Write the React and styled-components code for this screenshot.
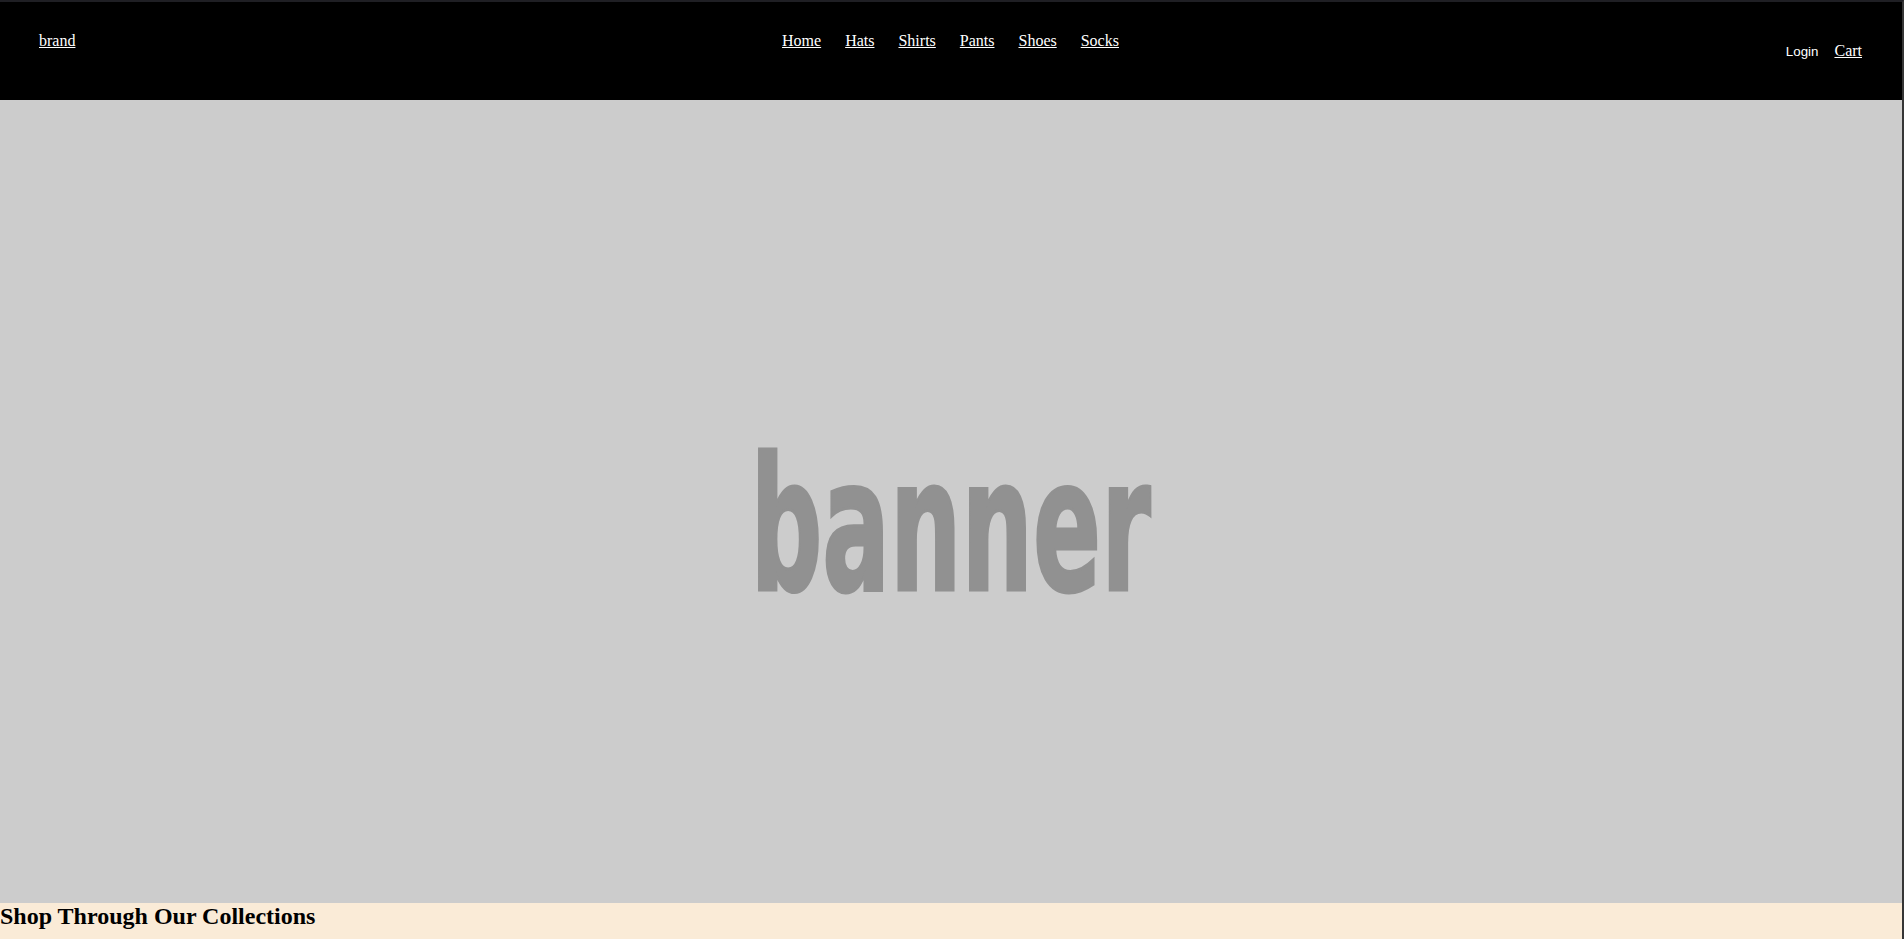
import React from 'react'
import styled, { createGlobalStyle } from 'styled-components'

const GlobalStyle = createGlobalStyle`
    html, body {
        margin: 0;
        padding: 0;
        overflow: hidden;
        background: #ffffff;
    }
    body {
        font-family: "Liberation Serif", "Times New Roman", serif;
        font-size: 16px;
    }
`

const Page = styled.div`
    width: 1904px;
    box-sizing: border-box;
    border-top: 2px solid #1f1f24;
    border-right: 2px solid #363636;
`

const Header = styled.header`
    display: grid;
    grid-template-columns: 1fr auto 1fr;
    align-items: start;
    height: 98px;
    box-sizing: border-box;
    padding: 30px 40px 0 39px;
    background: #000000;
`

const Brand = styled.a`
    justify-self: start;
    color: #ffffff;
    text-decoration: underline;
    cursor: pointer;
`

const Nav = styled.nav`
    display: flex;
    gap: 24px;
`

const NavLink = styled.a`
    color: #ffffff;
    text-decoration: underline;
    cursor: pointer;
`

const Account = styled.div`
    justify-self: end;
    display: flex;
    align-items: baseline;
    gap: 10px;
    margin-top: 10px;
`

const LoginButton = styled.button`
    padding: 1px 6px;
    border: none;
    background: none;
    color: #ffffff;
    font-family: "Liberation Sans", Arial, sans-serif;
    font-size: 13.33px;
    cursor: pointer;
`

const Banner = styled.section`
    display: flex;
    align-items: center;
    justify-content: center;
    height: 803px;
    overflow: hidden;
    background: #cccccc;
`

const BannerText = styled.span`
    display: block;
    font-family: "DejaVu Sans", sans-serif;
    font-stretch: condensed;
    font-weight: 700;
    font-size: 186px;
    line-height: 1;
    color: #919191;
    -webkit-text-stroke: 3px #919191;
    transform: translateY(24px) scaleX(0.6);
`

const Collections = styled.section`
    background: #faebd7;
    min-height: 200px;
`

const Title = styled.h2`
    margin: 0;
    font-size: 24px;
    font-weight: 700;
    color: #000000;
`

const links = ['Home', 'Hats', 'Shirts', 'Pants', 'Shoes', 'Socks']

export default function App() {
    return (
        <Page>
            <GlobalStyle />
            <Header>
                <Brand>brand</Brand>
                <Nav>
                    {links.map((name) => (
                        <NavLink key={name}>{name}</NavLink>
                    ))}
                </Nav>
                <Account>
                    <LoginButton>Login</LoginButton>
                    <NavLink>Cart</NavLink>
                </Account>
            </Header>
            <Banner>
                <BannerText>banner</BannerText>
            </Banner>
            <Collections>
                <Title>Shop Through Our Collections</Title>
            </Collections>
        </Page>
    )
}
